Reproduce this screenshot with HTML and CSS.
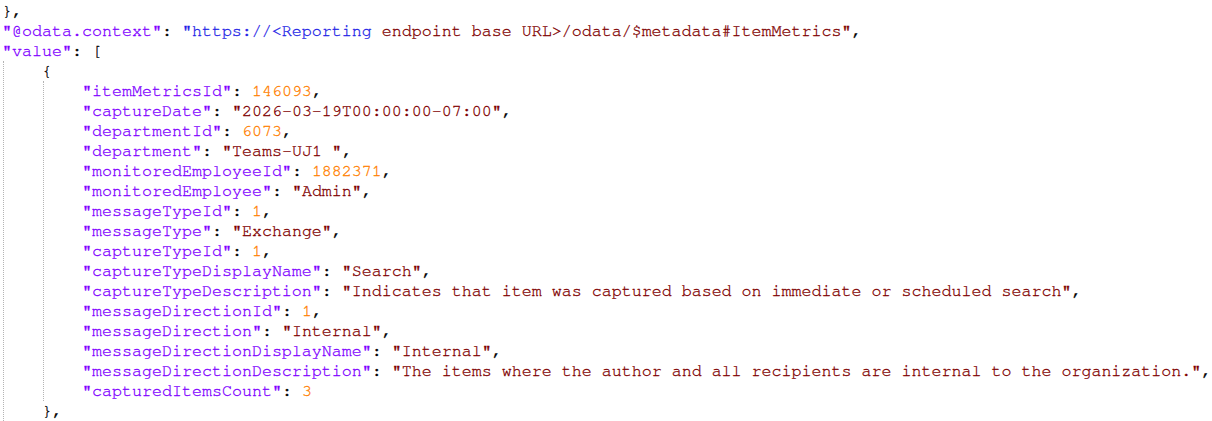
FILE: index.html
```html
<!DOCTYPE html>
<html>
<head>
<meta charset="utf-8">
<link rel="stylesheet" href="styles.css">
</head>
<body>
<div class="editor">
  <div class="ln"><span class="op">},</span></div>
  <div class="ln"><span class="key">"@odata.context"</span><span class="op">: </span><span class="url">"https://&lt;Reporting</span><span class="str"> endpoint base URL&gt;/odata/$metadata#ItemMetrics"</span><span class="op">,</span></div>
  <div class="ln"><span class="key">"value"</span><span class="op">: [</span></div>
  <div class="guide outer">
    <div class="ln"><span class="op">{</span></div>
    <div class="guide inner">
      <div class="ln"><span class="key">"itemMetricsId"</span><span class="op">: </span><span class="num">146093</span><span class="op">,</span></div>
      <div class="ln"><span class="key">"captureDate"</span><span class="op">: </span><span class="str">"2026-03-19T00:00:00-07:00"</span><span class="op">,</span></div>
      <div class="ln"><span class="key">"departmentId"</span><span class="op">: </span><span class="num">6073</span><span class="op">,</span></div>
      <div class="ln"><span class="key">"department"</span><span class="op">: </span><span class="str">"Teams-UJ1 "</span><span class="op">,</span></div>
      <div class="ln"><span class="key">"monitoredEmployeeId"</span><span class="op">: </span><span class="num">1882371</span><span class="op">,</span></div>
      <div class="ln"><span class="key">"monitoredEmployee"</span><span class="op">: </span><span class="str">"Admin"</span><span class="op">,</span></div>
      <div class="ln"><span class="key">"messageTypeId"</span><span class="op">: </span><span class="num">1</span><span class="op">,</span></div>
      <div class="ln"><span class="key">"messageType"</span><span class="op">: </span><span class="str">"Exchange"</span><span class="op">,</span></div>
      <div class="ln"><span class="key">"captureTypeId"</span><span class="op">: </span><span class="num">1</span><span class="op">,</span></div>
      <div class="ln"><span class="key">"captureTypeDisplayName"</span><span class="op">: </span><span class="str">"Search"</span><span class="op">,</span></div>
      <div class="ln"><span class="key">"captureTypeDescription"</span><span class="op">: </span><span class="str">"Indicates that item was captured based on immediate or scheduled search"</span><span class="op">,</span></div>
      <div class="ln"><span class="key">"messageDirectionId"</span><span class="op">: </span><span class="num">1</span><span class="op">,</span></div>
      <div class="ln"><span class="key">"messageDirection"</span><span class="op">: </span><span class="str">"Internal"</span><span class="op">,</span></div>
      <div class="ln"><span class="key">"messageDirectionDisplayName"</span><span class="op">: </span><span class="str">"Internal"</span><span class="op">,</span></div>
      <div class="ln"><span class="key">"messageDirectionDescription"</span><span class="op">: </span><span class="str">"The items where the author and all recipients are internal to the organization."</span><span class="op">,</span></div>
      <div class="ln"><span class="key">"capturedItemsCount"</span><span class="op">: </span><span class="num">3</span></div>
    </div>
    <div class="ln"><span class="op">},</span></div>
  </div>
</div>
</body>
</html>
```
FILE: styles.css
```css
html, body {
  margin: 0;
  padding: 0;
  background: #ffffff;
}

.editor {
  width: 1212px;
  height: 421px;
  overflow: hidden;
  padding: 1px 0 0 2px;
  box-sizing: border-box;
  font-family: "Nimbus Mono PS", "Nimbus Mono L", "FreeMono", "Liberation Mono", monospace;
  font-size: 16.667px;
  line-height: 20px;
  color: #000000;
  -webkit-text-stroke: 0.3px currentColor;
}

.ln {
  height: 20px;
  white-space: pre;
}

.guide {
  border-left: 1px dotted #b4b4b4;
}

.outer {
  margin-left: 1px;
  padding-left: 38px;
}

.inner {
  margin-left: 1px;
  padding-left: 38px;
}

.key { color: #8000ff; }
.str { color: #800000; }
.num { color: #ff8000; }
.url { color: #1f1fe6; }
.op  { color: #000000; }
```
